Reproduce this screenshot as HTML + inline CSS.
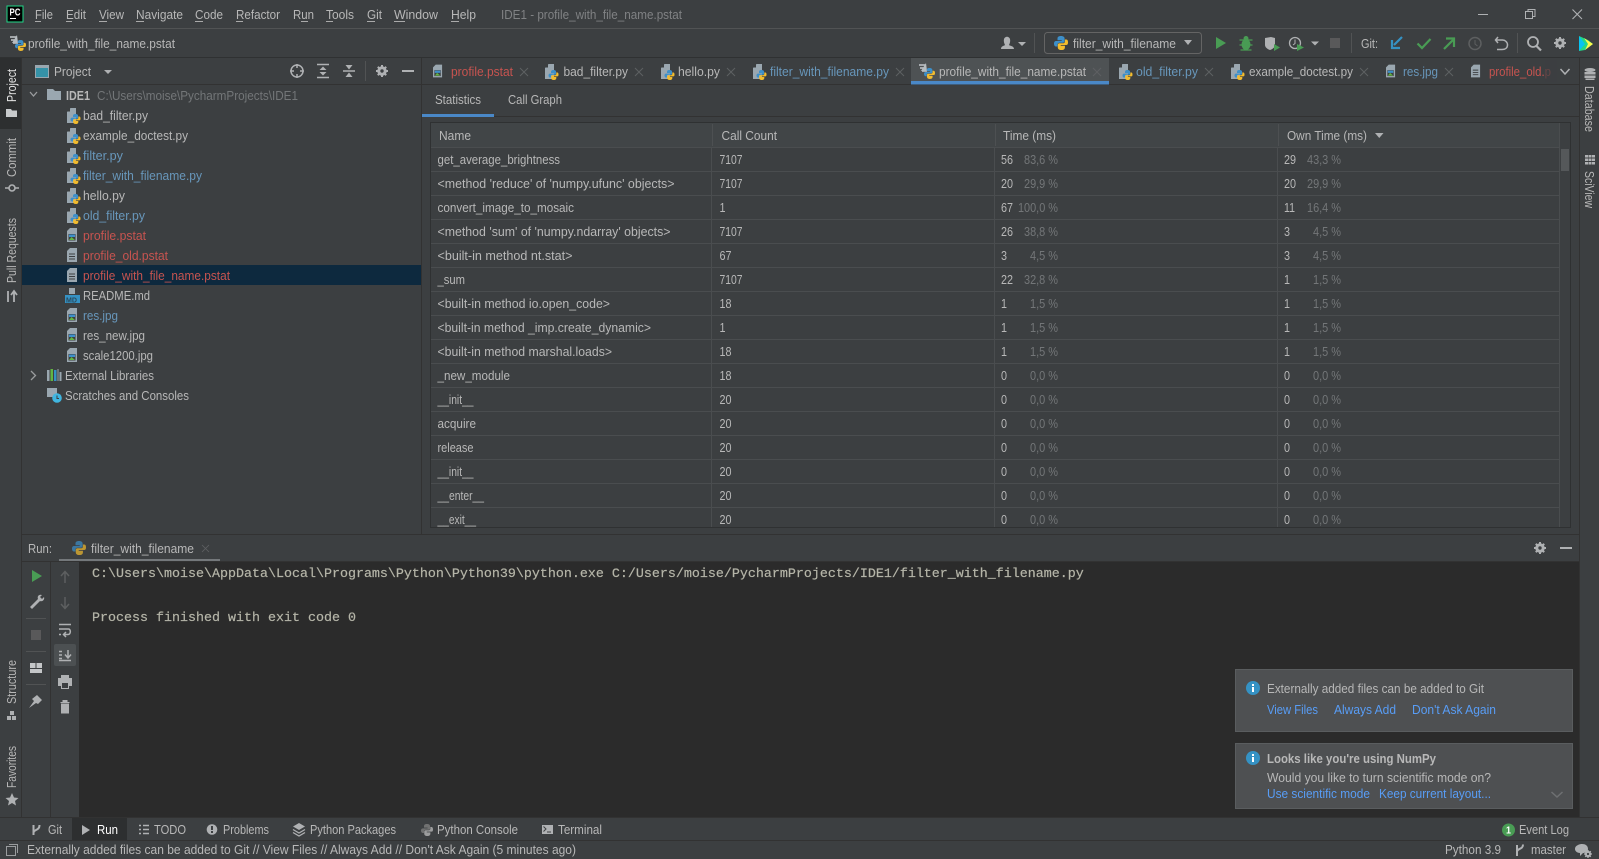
<!DOCTYPE html>
<html lang="en">
<head>
<meta charset="utf-8">
<title>IDE1 - profile_with_file_name.pstat</title>
<style>
html,body{margin:0;padding:0;background:#3c3f41;width:1599px;height:859px;overflow:hidden}
svg{display:block;position:absolute;left:0;top:0}
text{font-family:"Liberation Sans",sans-serif;font-size:13px;fill:#b8b8b8;white-space:pre}
.m{font-family:"Liberation Mono",monospace;font-size:13.33px;fill:#b5b5a8;stroke:#b5b5a8;stroke-width:.2}
.b{fill:#6897bb}.r{fill:#c75450}.g{fill:#737678}.l{fill:#589df6}.w{fill:#e4e4e4}
</style>
</head>
<body>
<svg width="1599" height="859" viewBox="0 0 1599 859" xmlns="http://www.w3.org/2000/svg">
<defs>
<symbol id="snake" viewBox="0 0 10 10" overflow="visible">
<path d="M5 0C3 0 2.500.8 2.500 2V3H5.500V3.600H1.500C.4 3.600 0 4.500 0 5.500S.5 7.500 1.500 7.500H2.500V6C2.500 5.200 3.200 4.800 4 4.800H6.500C7.200 4.800 7.600 4.300 7.600 3.600V2C7.600.8 6.800 0 5 0Z" fill="#3d8fc9"/>
<path d="M5.200 10C7.200 10 7.800 9.200 7.800 8V7H4.800V6.400H8.800C9.800 6.400 10 5.500 10 4.500S9.700 2.500 8.800 2.500H7.800V4C7.800 4.800 7.100 5.200 6.300 5.200H3.800C3.100 5.200 2.700 5.700 2.700 6.400V8C2.700 9.200 3.500 10 5.200 10Z" fill="#f2bc2e"/>
</symbol>
<symbol id="py" viewBox="0 0 14 16" overflow="visible">
<path d="M3.500 0H9V15H0V4Z" fill="#9aa7b0"/><path d="M3 0V3.500H0Z" fill="#3c3f41"/>
<use href="#snake" x="3.500" y="6" width="10" height="10"/>
</symbol>
<symbol id="txt" viewBox="0 0 11 15" overflow="visible">
<path d="M3 0H10V14H0V3Z" fill="#9aa7b0"/>
<path d="M2 6H8M2 8.500H8M2 11H8" stroke="#3c3f41" stroke-width="1"/>
</symbol>
<symbol id="img" viewBox="0 0 11 15" overflow="visible">
<path d="M3 0H10V14H0V3Z" fill="#9aa7b0"/>
<rect x="1.500" y="6" width="7" height="6.500" fill="#3c3f41"/>
<path d="M2 12L4.500 9L8 12Z" fill="#62b543"/><rect x="2" y="6.500" width="6" height="2.500" fill="#3d8fc9"/>
</symbol>
<symbol id="pst" viewBox="0 0 16 17" overflow="visible">
<path d="M0 2H7M1 5H7M3 8H8" stroke="#c4c8cc" stroke-width="1.500"/>
<path d="M7 0L8 8H2Z" fill="#b6bcc0"/>
<use href="#snake" x="5" y="5" width="11" height="11"/>
</symbol>
<symbol id="x" viewBox="0 0 8 8" overflow="visible"><path d="M0 0L8 8M8 0L0 8" stroke="#5e6062" stroke-width="1"/></symbol>
<symbol id="gear" viewBox="0 0 12 12" overflow="visible">
<circle cx="6" cy="6" r="3.500" fill="none" stroke="#afb1b3" stroke-width="2.500"/>
<path d="M6 0V12M0 6H12M1.800 1.800L10.200 10.200M10.200 1.800L1.800 10.200" stroke="#afb1b3" stroke-width="2"/>
<circle cx="6" cy="6" r="1.700" fill="#3c3f41"/>
</symbol>
</defs>

<rect width="1599" height="859" fill="#3c3f41"/>
<!-- title bar -->
<rect x="0" y="28" width="1599" height="1" fill="#515354"/>
<rect x="0" y="57" width="1599" height="1" fill="#2f3132"/>
<rect x="7" y="6" width="16" height="16" fill="#000" stroke="#21d789" stroke-width="1"/>
<text x="9.500" y="15.500" textLength="11" lengthAdjust="spacingAndGlyphs" style="font-size:10px;font-weight:bold;fill:#fff">PC</text>
<rect x="10" y="18" width="6" height="1" fill="#fff"/>
<text x="35" y="19" textLength="18" lengthAdjust="spacingAndGlyphs">File</text>
<text x="66" y="19" textLength="20" lengthAdjust="spacingAndGlyphs">Edit</text>
<text x="99" y="19" textLength="25" lengthAdjust="spacingAndGlyphs">View</text>
<text x="136" y="19" textLength="47" lengthAdjust="spacingAndGlyphs">Navigate</text>
<text x="195" y="19" textLength="28" lengthAdjust="spacingAndGlyphs">Code</text>
<text x="236" y="19" textLength="44" lengthAdjust="spacingAndGlyphs">Refactor</text>
<text x="293" y="19" textLength="21" lengthAdjust="spacingAndGlyphs">Run</text>
<text x="326" y="19" textLength="28" lengthAdjust="spacingAndGlyphs">Tools</text>
<text x="367" y="19" textLength="15" lengthAdjust="spacingAndGlyphs">Git</text>
<text x="394" y="19" textLength="44" lengthAdjust="spacingAndGlyphs">Window</text>
<text x="451" y="19" textLength="25" lengthAdjust="spacingAndGlyphs">Help</text>
<path d="M35 21.500H41M66 21.500H72M99 21.500H107M136 21.500H144M195 21.500H203M236 21.500H243M301 21.500H308M326 21.500H333M367 21.500H375M394 21.500H405M451 21.500H459" stroke="#aaa" stroke-width="1"/>
<text x="501" y="19" textLength="181" lengthAdjust="spacingAndGlyphs" class="g" style="fill:#808284">IDE1 - profile_with_file_name.pstat</text>
<rect x="1478" y="14" width="10" height="1" fill="#afb1b3"/>
<rect x="1525.500" y="11.500" width="7" height="7" fill="none" stroke="#afb1b3"/><path d="M1528 11V9.500H1535V16.500H1533" fill="none" stroke="#afb1b3"/>
<path d="M1572.500 9.500L1582 19M1582 9.500L1572.500 19" stroke="#afb1b3" stroke-width="1.100"/>

<!-- nav bar -->
<use href="#pst" x="10" y="35" width="16" height="17"/>
<text x="28" y="48" textLength="147" lengthAdjust="spacingAndGlyphs">profile_with_file_name.pstat</text>
<path d="M1001 49C1001 46 1004 46 1005 45C1004 43 1003.500 41 1004 39C1005 36 1009 36 1010 39C1010.500 41 1010 43 1009 45C1010 46 1014 46 1014 49Z" fill="#afb1b3"/>
<path d="M1018 42H1026L1022 46Z" fill="#afb1b3"/>
<rect x="1034" y="33" width="1" height="20" fill="#515354"/>
<rect x="1044.500" y="32.500" width="157" height="21" rx="3" fill="none" stroke="#646464"/>
<use href="#snake" x="1054" y="36" width="14" height="14"/>
<text x="1073" y="48" textLength="103" lengthAdjust="spacingAndGlyphs">filter_with_filename</text>
<path d="M1184 40H1192L1188 45Z" fill="#afb1b3"/>
<path d="M1216 37L1226 43L1216 49Z" fill="#499c54"/>
<g fill="#499c54"><ellipse cx="1246" cy="44.500" rx="4.500" ry="5.500"/><circle cx="1246" cy="38.500" r="2.500"/><path d="M1239.500 40L1252.500 40M1239.500 45H1252.500M1240.500 50L1251.500 50" stroke="#499c54" stroke-width="1.300"/></g>
<path d="M1265 38L1271 37L1275 38V45C1275 47 1273 49 1270 50C1267 49 1265 47 1265 45Z" fill="#afb1b3"/><path d="M1274 44L1280 47.500L1274 51Z" fill="#499c54"/>
<circle cx="1295" cy="43" r="5.500" fill="none" stroke="#afb1b3" stroke-width="1.300"/><path d="M1295 39.500V43.500L1293 45" fill="none" stroke="#afb1b3"/><path d="M1297 44L1304 47.500L1297 51Z" fill="#499c54"/>
<path d="M1311 41.500H1319L1315 45.500Z" fill="#afb1b3"/>
<rect x="1330" y="38" width="10" height="10" fill="#59595a"/>
<rect x="1351" y="33" width="1" height="20" fill="#515354"/>
<text x="1361" y="48" textLength="17" lengthAdjust="spacingAndGlyphs">Git:</text>
<path d="M1402 37L1394 45M1392 40V48H1400" fill="none" stroke="#3592c4" stroke-width="2.200"/>
<path d="M1417.500 43.500L1422 48L1430.500 39" fill="none" stroke="#499c54" stroke-width="2.200"/>
<path d="M1444 49L1453 40M1446 38.500H1454V47" fill="none" stroke="#499c54" stroke-width="2.200"/>
<circle cx="1475" cy="43.500" r="6" fill="none" stroke="#5d5f60" stroke-width="1.500"/><path d="M1475 40V44L1477.500 46" fill="none" stroke="#5d5f60"/>
<path d="M1498 37L1495.500 40L1498 43M1496 40H1502.500C1505 40 1507.500 42 1507.500 45S1505 49.500 1502 49.500H1497" fill="none" stroke="#afb1b3" stroke-width="1.500"/>
<rect x="1517" y="33" width="1" height="20" fill="#515354"/>
<circle cx="1533" cy="42" r="5" fill="none" stroke="#afb1b3" stroke-width="1.800"/><path d="M1536.500 46L1541 50.500" stroke="#afb1b3" stroke-width="2.200"/>
<use href="#gear" x="1554" y="37" width="12" height="12"/>
<path d="M1579 36L1588 40L1593 44L1585 50L1579 51Z" fill="#21d789"/><path d="M1579 36L1585 44L1579 51Z" fill="#07c3f2"/><path d="M1584 38L1593 44L1585 50L1588 44Z" fill="#fcf84a"/>

<!-- left stripe -->
<rect x="0" y="58" width="21" height="801" fill="#3c3f41"/>
<rect x="0" y="58" width="21" height="71" fill="#2d2f30"/>
<rect x="21" y="58" width="1" height="759" fill="#323232"/>
<text transform="translate(16,102) rotate(-90)" textLength="33" lengthAdjust="spacingAndGlyphs" class="w">Project</text>
<path d="M6 109H11L12 110.500H17V117H6Z" fill="#c8cacc"/>
<text transform="translate(16,177) rotate(-90)" textLength="39" lengthAdjust="spacingAndGlyphs">Commit</text>
<circle cx="12" cy="188" r="3" fill="none" stroke="#afb1b3" stroke-width="1.600"/><path d="M5 188H9M15 188H19" stroke="#afb1b3" stroke-width="1.600"/>
<text transform="translate(16,283) rotate(-90)" textLength="65" lengthAdjust="spacingAndGlyphs">Pull Requests</text>
<path d="M8 291V302M11 295L14 291L17 295M14 292V302" fill="none" stroke="#afb1b3" stroke-width="1.800"/>
<text transform="translate(16,704) rotate(-90)" textLength="44" lengthAdjust="spacingAndGlyphs">Structure</text>
<rect x="10" y="711" width="4" height="4" fill="#afb1b3"/><rect x="7" y="716" width="4" height="4" fill="#afb1b3"/><rect x="12" y="716" width="4" height="4" fill="#afb1b3"/>
<text transform="translate(16,788) rotate(-90)" textLength="42" lengthAdjust="spacingAndGlyphs">Favorites</text>
<path d="M12 793L14 797.500L18.500 798L15 801L16 805.500L12 803L8 805.500L9 801L5.500 798L10 797.500Z" fill="#afb1b3"/>

<!-- right stripe -->
<rect x="1579" y="58" width="1" height="759" fill="#323232"/>
<g fill="#afb1b3"><ellipse cx="1590" cy="70" rx="5.500" ry="2"/><rect x="1584.500" y="72" width="11" height="2.500"/><rect x="1584.500" y="75.500" width="11" height="2.500"/><rect x="1585.500" y="78.500" width="9" height="1.500"/></g>
<text transform="translate(1585,86) rotate(90)" textLength="46" lengthAdjust="spacingAndGlyphs">Database</text>
<g fill="#afb1b3"><rect x="1585" y="155" width="3" height="2.500"/><rect x="1588.500" y="155" width="3" height="2.500"/><rect x="1592" y="155" width="3" height="2.500"/><rect x="1585" y="158.500" width="3" height="2.500"/><rect x="1588.500" y="158.500" width="3" height="2.500"/><rect x="1592" y="158.500" width="3" height="2.500"/><rect x="1585" y="162" width="3" height="2.500"/><rect x="1588.500" y="162" width="3" height="2.500"/><rect x="1592" y="162" width="3" height="2.500"/></g>
<text transform="translate(1585,171) rotate(90)" textLength="37" lengthAdjust="spacingAndGlyphs">SciView</text>

<!-- project panel -->
<rect x="22" y="84" width="399" height="1" fill="#323232"/>
<rect x="421" y="58" width="1" height="476" fill="#323232"/>
<rect x="35.500" y="65.500" width="13" height="12" fill="#3592a8" stroke="#9aa7b0"/><rect x="35" y="65" width="14" height="3" fill="#9aa7b0"/>
<text x="54" y="76" textLength="37" lengthAdjust="spacingAndGlyphs">Project</text>
<path d="M104 70H112L108 74Z" fill="#afb1b3"/>
<circle cx="297" cy="71" r="6" fill="none" stroke="#afb1b3" stroke-width="1.500"/><path d="M297 64V68M297 74V78M290 71H294M300 71H304" stroke="#afb1b3" stroke-width="1.500"/>
<path d="M317 64.500H329M317 77.500H329" stroke="#afb1b3" stroke-width="1.500"/><path d="M323 66.500L326.500 70H319.500ZM323 75.500L326.500 72H319.500Z" fill="#afb1b3"/>
<path d="M343 71H355" stroke="#afb1b3" stroke-width="1.500"/><path d="M349 69.500L345.500 65H352.500ZM349 72.500L345.500 77H352.500Z" fill="#afb1b3"/>
<rect x="365" y="61" width="1" height="20" fill="#515354"/>
<use href="#gear" x="376" y="65" width="12" height="12"/>
<rect x="402" y="70" width="12" height="2" fill="#afb1b3"/>

<!-- tree -->
<rect x="22" y="265" width="399" height="20" fill="#0d293e"/>
<path d="M30 92L33.500 96L37 92" fill="none" stroke="#9a9c9e" stroke-width="1.300"/>
<path d="M47 89H53L55 91H61V100H47Z" fill="#9aa7b0"/>
<text x="66" y="100" textLength="24" lengthAdjust="spacingAndGlyphs" style="font-weight:bold">IDE1</text>
<text x="97" y="100" textLength="201" lengthAdjust="spacingAndGlyphs" class="g">C:\Users\moise\PycharmProjects\IDE1</text>
<use href="#py" x="67" y="108" width="14" height="16"/><text x="83" y="120" textLength="65" lengthAdjust="spacingAndGlyphs">bad_filter.py</text>
<use href="#py" x="67" y="128" width="14" height="16"/><text x="83" y="140" textLength="105" lengthAdjust="spacingAndGlyphs">example_doctest.py</text>
<use href="#py" x="67" y="148" width="14" height="16"/><text x="83" y="160" textLength="40" lengthAdjust="spacingAndGlyphs" class="b">filter.py</text>
<use href="#py" x="67" y="168" width="14" height="16"/><text x="83" y="180" textLength="119" lengthAdjust="spacingAndGlyphs" class="b">filter_with_filename.py</text>
<use href="#py" x="67" y="188" width="14" height="16"/><text x="83" y="200" textLength="42" lengthAdjust="spacingAndGlyphs">hello.py</text>
<use href="#py" x="67" y="208" width="14" height="16"/><text x="83" y="220" textLength="62" lengthAdjust="spacingAndGlyphs" class="b">old_filter.py</text>
<use href="#img" x="67" y="228" width="11" height="15"/><text x="83" y="240" textLength="63" lengthAdjust="spacingAndGlyphs" class="r">profile.pstat</text>
<use href="#txt" x="67" y="248" width="11" height="15"/><text x="83" y="260" textLength="85" lengthAdjust="spacingAndGlyphs" class="r">profile_old.pstat</text>
<use href="#txt" x="67" y="268" width="11" height="15"/><text x="83" y="280" textLength="147" lengthAdjust="spacingAndGlyphs" class="r">profile_with_file_name.pstat</text>
<path d="M69 288H75V294H69Z" fill="#9aa7b0"/><rect x="65" y="295" width="15" height="8" fill="#3592c4"/>
<text x="66" y="302.500" textLength="11" lengthAdjust="spacingAndGlyphs" style="font-size:7px;font-weight:bold;fill:#2b4a5c">MD</text>
<text x="83" y="300" textLength="67" lengthAdjust="spacingAndGlyphs">README.md</text>
<use href="#img" x="67" y="308" width="11" height="15"/><text x="83" y="320" textLength="35" lengthAdjust="spacingAndGlyphs" class="b">res.jpg</text>
<use href="#img" x="67" y="328" width="11" height="15"/><text x="83" y="340" textLength="62" lengthAdjust="spacingAndGlyphs">res_new.jpg</text>
<use href="#img" x="67" y="348" width="11" height="15"/><text x="83" y="360" textLength="70" lengthAdjust="spacingAndGlyphs">scale1200.jpg</text>
<path d="M31 371L35.500 375.500L31 380" fill="none" stroke="#9a9c9e" stroke-width="1.300"/>
<rect x="47" y="370" width="2.500" height="11" fill="#9aa7b0"/><rect x="50.500" y="369" width="2.500" height="12" fill="#62b543"/><rect x="54" y="370" width="2.500" height="11" fill="#3592c4"/><rect x="57.500" y="369" width="1" height="12" fill="#9aa7b0"/><rect x="59.500" y="372" width="2" height="9" fill="#9aa7b0"/>
<text x="65" y="380" textLength="89" lengthAdjust="spacingAndGlyphs">External Libraries</text>
<rect x="47" y="388" width="10" height="9" fill="#9aa7b0"/><circle cx="57" cy="398" r="4.800" fill="#40b6e0"/><path d="M57 395.500V398.500H59" fill="none" stroke="#3c3f41"/>
<text x="65" y="400" textLength="124" lengthAdjust="spacingAndGlyphs">Scratches and Consoles</text>

<!-- editor tabs -->
<rect x="422" y="84" width="1157" height="1" fill="#323232"/>
<rect x="911" y="58" width="198" height="24" fill="#4e5254"/>
<rect x="911" y="81" width="198" height="3.500" fill="#4a88c7"/>
<use href="#img" x="433" y="64" width="10" height="15"/><text x="451" y="76" textLength="62" lengthAdjust="spacingAndGlyphs" class="r">profile.pstat</text><use href="#x" x="520" y="68" width="8" height="8"/>
<use href="#py" x="545" y="64" width="14" height="16"/><text x="563.500" y="76" textLength="64.500" lengthAdjust="spacingAndGlyphs">bad_filter.py</text><use href="#x" x="635" y="68" width="8" height="8"/>
<use href="#py" x="661" y="64" width="14" height="16"/><text x="678" y="76" textLength="42" lengthAdjust="spacingAndGlyphs">hello.py</text><use href="#x" x="727" y="68" width="8" height="8"/>
<use href="#py" x="753" y="64" width="14" height="16"/><text x="770" y="76" textLength="119" lengthAdjust="spacingAndGlyphs" class="b">filter_with_filename.py</text><use href="#x" x="896" y="68" width="8" height="8"/>
<use href="#pst" x="919" y="63" width="16" height="17"/><text x="939" y="76" textLength="147" lengthAdjust="spacingAndGlyphs">profile_with_file_name.pstat</text><use href="#x" x="1093" y="68" width="8" height="8"/>
<use href="#py" x="1119" y="64" width="14" height="16"/><text x="1136" y="76" textLength="62" lengthAdjust="spacingAndGlyphs" class="b">old_filter.py</text><use href="#x" x="1205" y="68" width="8" height="8"/>
<use href="#py" x="1231" y="64" width="14" height="16"/><text x="1249" y="76" textLength="104" lengthAdjust="spacingAndGlyphs">example_doctest.py</text><use href="#x" x="1360" y="68" width="8" height="8"/>
<use href="#img" x="1386" y="64" width="10" height="15"/><text x="1403" y="76" textLength="35" lengthAdjust="spacingAndGlyphs" class="b">res.jpg</text><use href="#x" x="1445" y="68" width="8" height="8"/>
<use href="#txt" x="1471" y="64" width="10" height="15"/><text x="1489" y="76" textLength="62" lengthAdjust="spacingAndGlyphs" class="r">profile_old.p</text>
<rect x="1545" y="60" width="12" height="22" fill="#3c3f41" opacity=".7"/>
<path d="M1560.500 69L1565 74L1569.500 69" fill="none" stroke="#afb1b3" stroke-width="1.500"/>

<!-- sub tabs -->
<text x="435" y="104" textLength="46" lengthAdjust="spacingAndGlyphs">Statistics</text>
<text x="508" y="104" textLength="54" lengthAdjust="spacingAndGlyphs">Call Graph</text>
<rect x="422" y="114" width="72" height="3" fill="#4a88c7"/>
<rect x="494" y="116" width="1085" height="1" fill="#323232"/>

<!-- table -->
<rect x="430" y="122" width="1130" height="25" fill="#414547"/>
<rect x="430.500" y="122.500" width="1140" height="405" fill="none" stroke="#2f3132"/>
<rect x="1559" y="123" width="1" height="404" fill="#4a4d4f"/>
<g fill="#4d5052">
<rect x="712" y="124" width="1" height="22"/><rect x="995" y="124" width="1" height="22"/><rect x="1278" y="124" width="1" height="22"/>
</g>
<text x="439" y="140" textLength="32" lengthAdjust="spacingAndGlyphs">Name</text>
<text x="721.500" y="140" textLength="55.500" lengthAdjust="spacingAndGlyphs">Call Count</text>
<text x="1003" y="140" textLength="53" lengthAdjust="spacingAndGlyphs">Time (ms)</text>
<text x="1287" y="140" textLength="80" lengthAdjust="spacingAndGlyphs">Own Time (ms)</text>
<path d="M1375 133H1383.500L1379.250 138Z" fill="#afb1b3"/>
<rect x="1561" y="149" width="8" height="22" fill="#55585a"/>
<g stroke="#4a4d4f" stroke-width="1">
<path d="M431 147.500H1560M431 171.500H1560M431 195.500H1560M431 219.500H1560M431 243.500H1560M431 267.500H1560M431 291.500H1560M431 315.500H1560M431 339.500H1560M431 363.500H1560M431 387.500H1560M431 411.500H1560M431 435.500H1560M431 459.500H1560M431 483.500H1560M431 507.500H1560"/>
<path d="M711.500 147V527M994.500 147V527M1277.500 147V527"/>
</g>
<!-- name column -->
<text x="437.500" y="164" textLength="122.500" lengthAdjust="spacingAndGlyphs">get_average_brightness</text>
<text x="437.500" y="188" textLength="237" lengthAdjust="spacingAndGlyphs">&lt;method 'reduce' of 'numpy.ufunc' objects&gt;</text>
<text x="437.500" y="212" textLength="136.500" lengthAdjust="spacingAndGlyphs">convert_image_to_mosaic</text>
<text x="437.500" y="236" textLength="233" lengthAdjust="spacingAndGlyphs">&lt;method 'sum' of 'numpy.ndarray' objects&gt;</text>
<text x="437.500" y="260" textLength="135" lengthAdjust="spacingAndGlyphs">&lt;built-in method nt.stat&gt;</text>
<text x="437.500" y="284" textLength="27.500" lengthAdjust="spacingAndGlyphs">_sum</text>
<text x="437.500" y="308" textLength="172.500" lengthAdjust="spacingAndGlyphs">&lt;built-in method io.open_code&gt;</text>
<text x="437.500" y="332" textLength="213.500" lengthAdjust="spacingAndGlyphs">&lt;built-in method _imp.create_dynamic&gt;</text>
<text x="437.500" y="356" textLength="174.500" lengthAdjust="spacingAndGlyphs">&lt;built-in method marshal.loads&gt;</text>
<text x="437.500" y="380" textLength="72.500" lengthAdjust="spacingAndGlyphs">_new_module</text>
<text x="437.500" y="404" textLength="36" lengthAdjust="spacingAndGlyphs">__init__</text>
<text x="437.500" y="428" textLength="38.500" lengthAdjust="spacingAndGlyphs">acquire</text>
<text x="437.500" y="452" textLength="36" lengthAdjust="spacingAndGlyphs">release</text>
<text x="437.500" y="476" textLength="36" lengthAdjust="spacingAndGlyphs">__init__</text>
<text x="437.500" y="500" textLength="46.500" lengthAdjust="spacingAndGlyphs">__enter__</text>
<text x="437.500" y="524" textLength="38.500" lengthAdjust="spacingAndGlyphs">__exit__</text>
<!-- call count -->
<text x="719.500" y="164" textLength="23" lengthAdjust="spacingAndGlyphs">7107</text>
<text x="719.500" y="188" textLength="23" lengthAdjust="spacingAndGlyphs">7107</text>
<text x="719.500" y="212" textLength="6" lengthAdjust="spacingAndGlyphs">1</text>
<text x="719.500" y="236" textLength="23" lengthAdjust="spacingAndGlyphs">7107</text>
<text x="719.500" y="260" textLength="12" lengthAdjust="spacingAndGlyphs">67</text>
<text x="719.500" y="284" textLength="23" lengthAdjust="spacingAndGlyphs">7107</text>
<text x="719.500" y="308" textLength="12" lengthAdjust="spacingAndGlyphs">18</text>
<text x="719.500" y="332" textLength="6" lengthAdjust="spacingAndGlyphs">1</text>
<text x="719.500" y="356" textLength="12" lengthAdjust="spacingAndGlyphs">18</text>
<text x="719.500" y="380" textLength="12" lengthAdjust="spacingAndGlyphs">18</text>
<text x="719.500" y="404" textLength="12" lengthAdjust="spacingAndGlyphs">20</text>
<text x="719.500" y="428" textLength="12" lengthAdjust="spacingAndGlyphs">20</text>
<text x="719.500" y="452" textLength="12" lengthAdjust="spacingAndGlyphs">20</text>
<text x="719.500" y="476" textLength="12" lengthAdjust="spacingAndGlyphs">20</text>
<text x="719.500" y="500" textLength="12" lengthAdjust="spacingAndGlyphs">20</text>
<text x="719.500" y="524" textLength="12" lengthAdjust="spacingAndGlyphs">20</text>
<!-- time -->
<text x="1001" y="164" textLength="12" lengthAdjust="spacingAndGlyphs">56</text><text x="1024" y="164" textLength="34" lengthAdjust="spacingAndGlyphs" class="g">83,6 %</text>
<text x="1001" y="188" textLength="12" lengthAdjust="spacingAndGlyphs">20</text><text x="1024" y="188" textLength="34" lengthAdjust="spacingAndGlyphs" class="g">29,9 %</text>
<text x="1001" y="212" textLength="12" lengthAdjust="spacingAndGlyphs">67</text><text x="1018" y="212" textLength="40" lengthAdjust="spacingAndGlyphs" class="g">100,0 %</text>
<text x="1001" y="236" textLength="12" lengthAdjust="spacingAndGlyphs">26</text><text x="1024" y="236" textLength="34" lengthAdjust="spacingAndGlyphs" class="g">38,8 %</text>
<text x="1001" y="260" textLength="6" lengthAdjust="spacingAndGlyphs">3</text><text x="1030" y="260" textLength="28" lengthAdjust="spacingAndGlyphs" class="g">4,5 %</text>
<text x="1001" y="284" textLength="12" lengthAdjust="spacingAndGlyphs">22</text><text x="1024" y="284" textLength="34" lengthAdjust="spacingAndGlyphs" class="g">32,8 %</text>
<text x="1001" y="308" textLength="6" lengthAdjust="spacingAndGlyphs">1</text><text x="1030" y="308" textLength="28" lengthAdjust="spacingAndGlyphs" class="g">1,5 %</text>
<text x="1001" y="332" textLength="6" lengthAdjust="spacingAndGlyphs">1</text><text x="1030" y="332" textLength="28" lengthAdjust="spacingAndGlyphs" class="g">1,5 %</text>
<text x="1001" y="356" textLength="6" lengthAdjust="spacingAndGlyphs">1</text><text x="1030" y="356" textLength="28" lengthAdjust="spacingAndGlyphs" class="g">1,5 %</text>
<text x="1001" y="380" textLength="6" lengthAdjust="spacingAndGlyphs">0</text><text x="1030" y="380" textLength="28" lengthAdjust="spacingAndGlyphs" class="g">0,0 %</text>
<text x="1001" y="404" textLength="6" lengthAdjust="spacingAndGlyphs">0</text><text x="1030" y="404" textLength="28" lengthAdjust="spacingAndGlyphs" class="g">0,0 %</text>
<text x="1001" y="428" textLength="6" lengthAdjust="spacingAndGlyphs">0</text><text x="1030" y="428" textLength="28" lengthAdjust="spacingAndGlyphs" class="g">0,0 %</text>
<text x="1001" y="452" textLength="6" lengthAdjust="spacingAndGlyphs">0</text><text x="1030" y="452" textLength="28" lengthAdjust="spacingAndGlyphs" class="g">0,0 %</text>
<text x="1001" y="476" textLength="6" lengthAdjust="spacingAndGlyphs">0</text><text x="1030" y="476" textLength="28" lengthAdjust="spacingAndGlyphs" class="g">0,0 %</text>
<text x="1001" y="500" textLength="6" lengthAdjust="spacingAndGlyphs">0</text><text x="1030" y="500" textLength="28" lengthAdjust="spacingAndGlyphs" class="g">0,0 %</text>
<text x="1001" y="524" textLength="6" lengthAdjust="spacingAndGlyphs">0</text><text x="1030" y="524" textLength="28" lengthAdjust="spacingAndGlyphs" class="g">0,0 %</text>
<!-- own time -->
<text x="1284" y="164" textLength="12" lengthAdjust="spacingAndGlyphs">29</text><text x="1307" y="164" textLength="34" lengthAdjust="spacingAndGlyphs" class="g">43,3 %</text>
<text x="1284" y="188" textLength="12" lengthAdjust="spacingAndGlyphs">20</text><text x="1307" y="188" textLength="34" lengthAdjust="spacingAndGlyphs" class="g">29,9 %</text>
<text x="1284" y="212" textLength="11" lengthAdjust="spacingAndGlyphs">11</text><text x="1307" y="212" textLength="34" lengthAdjust="spacingAndGlyphs" class="g">16,4 %</text>
<text x="1284" y="236" textLength="6" lengthAdjust="spacingAndGlyphs">3</text><text x="1313" y="236" textLength="28" lengthAdjust="spacingAndGlyphs" class="g">4,5 %</text>
<text x="1284" y="260" textLength="6" lengthAdjust="spacingAndGlyphs">3</text><text x="1313" y="260" textLength="28" lengthAdjust="spacingAndGlyphs" class="g">4,5 %</text>
<text x="1284" y="284" textLength="6" lengthAdjust="spacingAndGlyphs">1</text><text x="1313" y="284" textLength="28" lengthAdjust="spacingAndGlyphs" class="g">1,5 %</text>
<text x="1284" y="308" textLength="6" lengthAdjust="spacingAndGlyphs">1</text><text x="1313" y="308" textLength="28" lengthAdjust="spacingAndGlyphs" class="g">1,5 %</text>
<text x="1284" y="332" textLength="6" lengthAdjust="spacingAndGlyphs">1</text><text x="1313" y="332" textLength="28" lengthAdjust="spacingAndGlyphs" class="g">1,5 %</text>
<text x="1284" y="356" textLength="6" lengthAdjust="spacingAndGlyphs">1</text><text x="1313" y="356" textLength="28" lengthAdjust="spacingAndGlyphs" class="g">1,5 %</text>
<text x="1284" y="380" textLength="6" lengthAdjust="spacingAndGlyphs">0</text><text x="1313" y="380" textLength="28" lengthAdjust="spacingAndGlyphs" class="g">0,0 %</text>
<text x="1284" y="404" textLength="6" lengthAdjust="spacingAndGlyphs">0</text><text x="1313" y="404" textLength="28" lengthAdjust="spacingAndGlyphs" class="g">0,0 %</text>
<text x="1284" y="428" textLength="6" lengthAdjust="spacingAndGlyphs">0</text><text x="1313" y="428" textLength="28" lengthAdjust="spacingAndGlyphs" class="g">0,0 %</text>
<text x="1284" y="452" textLength="6" lengthAdjust="spacingAndGlyphs">0</text><text x="1313" y="452" textLength="28" lengthAdjust="spacingAndGlyphs" class="g">0,0 %</text>
<text x="1284" y="476" textLength="6" lengthAdjust="spacingAndGlyphs">0</text><text x="1313" y="476" textLength="28" lengthAdjust="spacingAndGlyphs" class="g">0,0 %</text>
<text x="1284" y="500" textLength="6" lengthAdjust="spacingAndGlyphs">0</text><text x="1313" y="500" textLength="28" lengthAdjust="spacingAndGlyphs" class="g">0,0 %</text>
<text x="1284" y="524" textLength="6" lengthAdjust="spacingAndGlyphs">0</text><text x="1313" y="524" textLength="28" lengthAdjust="spacingAndGlyphs" class="g">0,0 %</text>
<rect x="422" y="528" width="1157" height="6" fill="#3c3f41"/>
<rect x="430" y="527" width="1141" height="1" fill="#2f3132"/>

<!-- run panel -->
<rect x="22" y="534" width="1557" height="1" fill="#323232"/>
<text x="28" y="553" textLength="24" lengthAdjust="spacingAndGlyphs">Run:</text>
<use href="#snake" x="72" y="541" width="14" height="14" opacity=".7"/>
<text x="91" y="553" textLength="103" lengthAdjust="spacingAndGlyphs">filter_with_filename</text>
<use href="#x" x="202" y="545" width="7" height="7"/>
<rect x="59" y="559" width="161" height="3" fill="#74787b"/>
<use href="#gear" x="1534" y="542" width="12" height="12"/>
<rect x="1560" y="547" width="12" height="2" fill="#afb1b3"/>
<rect x="22" y="561" width="1557" height="1" fill="#323232"/>
<rect x="50" y="562" width="1" height="255" fill="#323232"/>
<rect x="79" y="562" width="1500" height="255" fill="#2b2b2b"/>
<!-- run toolbars -->
<path d="M32 570L42 576L32 582Z" fill="#499c54"/>
<path d="M30 607L38 599C37 596 39 594 42 595L40 597L42 599L44 597C45 600 42 602 40 601L32 609Z" fill="#afb1b3"/>
<rect x="26" y="618" width="20" height="1" fill="#515354"/>
<rect x="31" y="630" width="10" height="10" fill="#59595a"/>
<rect x="26" y="651" width="20" height="1" fill="#515354"/>
<path d="M30 663h5.500v5H30zM36.500 663H42v5h-5.500zM30 669h12v4H30z" fill="#c4c6c8"/>
<rect x="26" y="684" width="20" height="1" fill="#515354"/>
<path d="M29 708L34 701L32 699L37 695L42 700L38 704L36 703Z" fill="#afb1b3"/>
<path d="M65 583V572M61 576L65 571.500L69 576" fill="none" stroke="#5d5f60" stroke-width="1.500"/>
<path d="M65 597V608M61 604L65 608.500L69 604" fill="none" stroke="#5d5f60" stroke-width="1.500"/>
<path d="M59 624.500H71M59 629H68.500C71 629 71 634.500 68 634.500H64M66 632L63.500 634.500L66 637M59 634.500H61" fill="none" stroke="#afb1b3" stroke-width="1.500"/>
<rect x="54" y="644" width="22" height="22" rx="2" fill="#4c5052"/>
<path d="M59 651.500H62M59 655H62M59 658.500H62M59 660.500H71M68 650V657M65 654.500L68 658L71 654.500" fill="none" stroke="#afb1b3" stroke-width="1.500"/>
<path d="M61 675H69V678H72V686H69V689H61V686H58V678H61Z" fill="#afb1b3"/><rect x="62" y="683" width="6" height="5" fill="#3c3f41"/>
<path d="M60.500 702.500H69.500M63 702V700.500H67V702M61.500 704H68.500V713H61.500Z" fill="#afb1b3" stroke="#afb1b3"/>
<!-- console -->
<text class="m" x="92" y="577">C:\Users\moise\AppData\Local\Programs\Python\Python39\python.exe C:/Users/moise/PycharmProjects/IDE1/filter_with_filename.py</text>
<text class="m" x="92" y="621">Process finished with exit code 0</text>

<!-- notifications -->
<rect x="1235.500" y="669.500" width="337" height="62" fill="#4e5052" stroke="#5a5d5f"/>
<circle cx="1253" cy="688" r="7" fill="#3592c4"/><rect x="1252" y="687" width="2" height="5" fill="#fff"/><rect x="1252" y="684" width="2" height="2" fill="#fff"/>
<text x="1267" y="693" textLength="217" lengthAdjust="spacingAndGlyphs">Externally added files can be added to Git</text>
<text x="1267" y="714" textLength="51" lengthAdjust="spacingAndGlyphs" class="l">View Files</text>
<text x="1334" y="714" textLength="62" lengthAdjust="spacingAndGlyphs" class="l">Always Add</text>
<text x="1412" y="714" textLength="84" lengthAdjust="spacingAndGlyphs" class="l">Don't Ask Again</text>
<rect x="1235.500" y="743.500" width="337" height="65" fill="#4e5052" stroke="#5a5d5f"/>
<circle cx="1253" cy="758" r="7" fill="#3592c4"/><rect x="1252" y="757" width="2" height="5" fill="#fff"/><rect x="1252" y="754" width="2" height="2" fill="#fff"/>
<text x="1267" y="763" textLength="169" lengthAdjust="spacingAndGlyphs" style="font-weight:bold">Looks like you're using NumPy</text>
<text x="1267" y="782" textLength="224" lengthAdjust="spacingAndGlyphs">Would you like to turn scientific mode on?</text>
<text x="1267" y="798" textLength="103" lengthAdjust="spacingAndGlyphs" class="l">Use scientific mode</text>
<text x="1379" y="798" textLength="112" lengthAdjust="spacingAndGlyphs" class="l">Keep current layout...</text>
<path d="M1551.500 792L1557 797L1562.500 792" fill="none" stroke="#6e7072" stroke-width="1.500"/>

<!-- bottom tool bar -->
<rect x="0" y="817" width="1599" height="1" fill="#323232"/>
<rect x="72" y="818" width="55" height="22" fill="#2d2f30"/>
<rect x="0" y="840" width="1599" height="1" fill="#323232"/>
<path d="M33.500 825V835M33.500 833C33.500 829 39.500 831 39.500 825" fill="none" stroke="#afb1b3" stroke-width="2"/>
<text x="48" y="834" textLength="14" lengthAdjust="spacingAndGlyphs">Git</text>
<path d="M82 825L90 830L82 835Z" fill="#afb1b3"/>
<text x="97" y="834" textLength="21" lengthAdjust="spacingAndGlyphs" style="fill:#fff">Run</text>
<path d="M139 825.500H141M143 825.500H149M139 829.500H141M143 829.500H149M139 833.500H141M143 833.500H149" stroke="#afb1b3" stroke-width="1.500"/>
<text x="154" y="834" textLength="32" lengthAdjust="spacingAndGlyphs">TODO</text>
<circle cx="212" cy="829.500" r="5.300" fill="#afb1b3"/><rect x="211" y="826" width="2" height="4" fill="#3c3f41"/><rect x="211" y="831" width="2" height="2" fill="#3c3f41"/>
<text x="223" y="834" textLength="46" lengthAdjust="spacingAndGlyphs">Problems</text>
<path d="M299 823L305 826.500L299 830L293 826.500Z" fill="#afb1b3"/><path d="M293 829.500L299 833L305 829.500M293 832.500L299 836L305 832.500" fill="none" stroke="#afb1b3" stroke-width="1.300"/>
<text x="310" y="834" textLength="86" lengthAdjust="spacingAndGlyphs">Python Packages</text>
<g opacity=".75" style="filter:grayscale(1)"><use href="#snake" x="421" y="824" width="12" height="12"/></g>
<text x="437" y="834" textLength="81" lengthAdjust="spacingAndGlyphs">Python Console</text>
<rect x="542" y="825" width="11" height="9" fill="#afb1b3"/><path d="M543.500 826.500L546 829L543.500 831.500M547 832H551" fill="none" stroke="#3c3f41"/>
<text x="558" y="834" textLength="44" lengthAdjust="spacingAndGlyphs">Terminal</text>
<circle cx="1508.500" cy="830" r="6.500" fill="#499c54"/>
<text x="1506" y="833.500" textLength="5" lengthAdjust="spacingAndGlyphs" style="font-size:10px;font-weight:bold;fill:#fff">1</text>
<text x="1519" y="834" textLength="50" lengthAdjust="spacingAndGlyphs">Event Log</text>

<!-- status bar -->
<rect x="6.500" y="846.500" width="9" height="9" fill="none" stroke="#9a9c9e"/><path d="M9 844.500H17.500V853" fill="none" stroke="#9a9c9e"/>
<text x="27" y="854" textLength="549" lengthAdjust="spacingAndGlyphs">Externally added files can be added to Git // View Files // Always Add // Don't Ask Again (5 minutes ago)</text>
<text x="1445" y="854" textLength="56" lengthAdjust="spacingAndGlyphs">Python 3.9</text>
<path d="M1517 845V856M1517 852C1517 848 1523 850 1523 844.500" fill="none" stroke="#afb1b3" stroke-width="2"/>
<text x="1531" y="854" textLength="35" lengthAdjust="spacingAndGlyphs">master</text>
<path d="M1578 845C1582 843 1588 844 1588 849C1588 852 1585 853 1583 853L1580 856V853C1577 853 1575 851 1575 849C1575 847 1576 846 1578 845Z" fill="#afb1b3"/>
<use href="#gear" x="1584" y="850" width="8" height="8"/>
</svg>
</body>
</html>
